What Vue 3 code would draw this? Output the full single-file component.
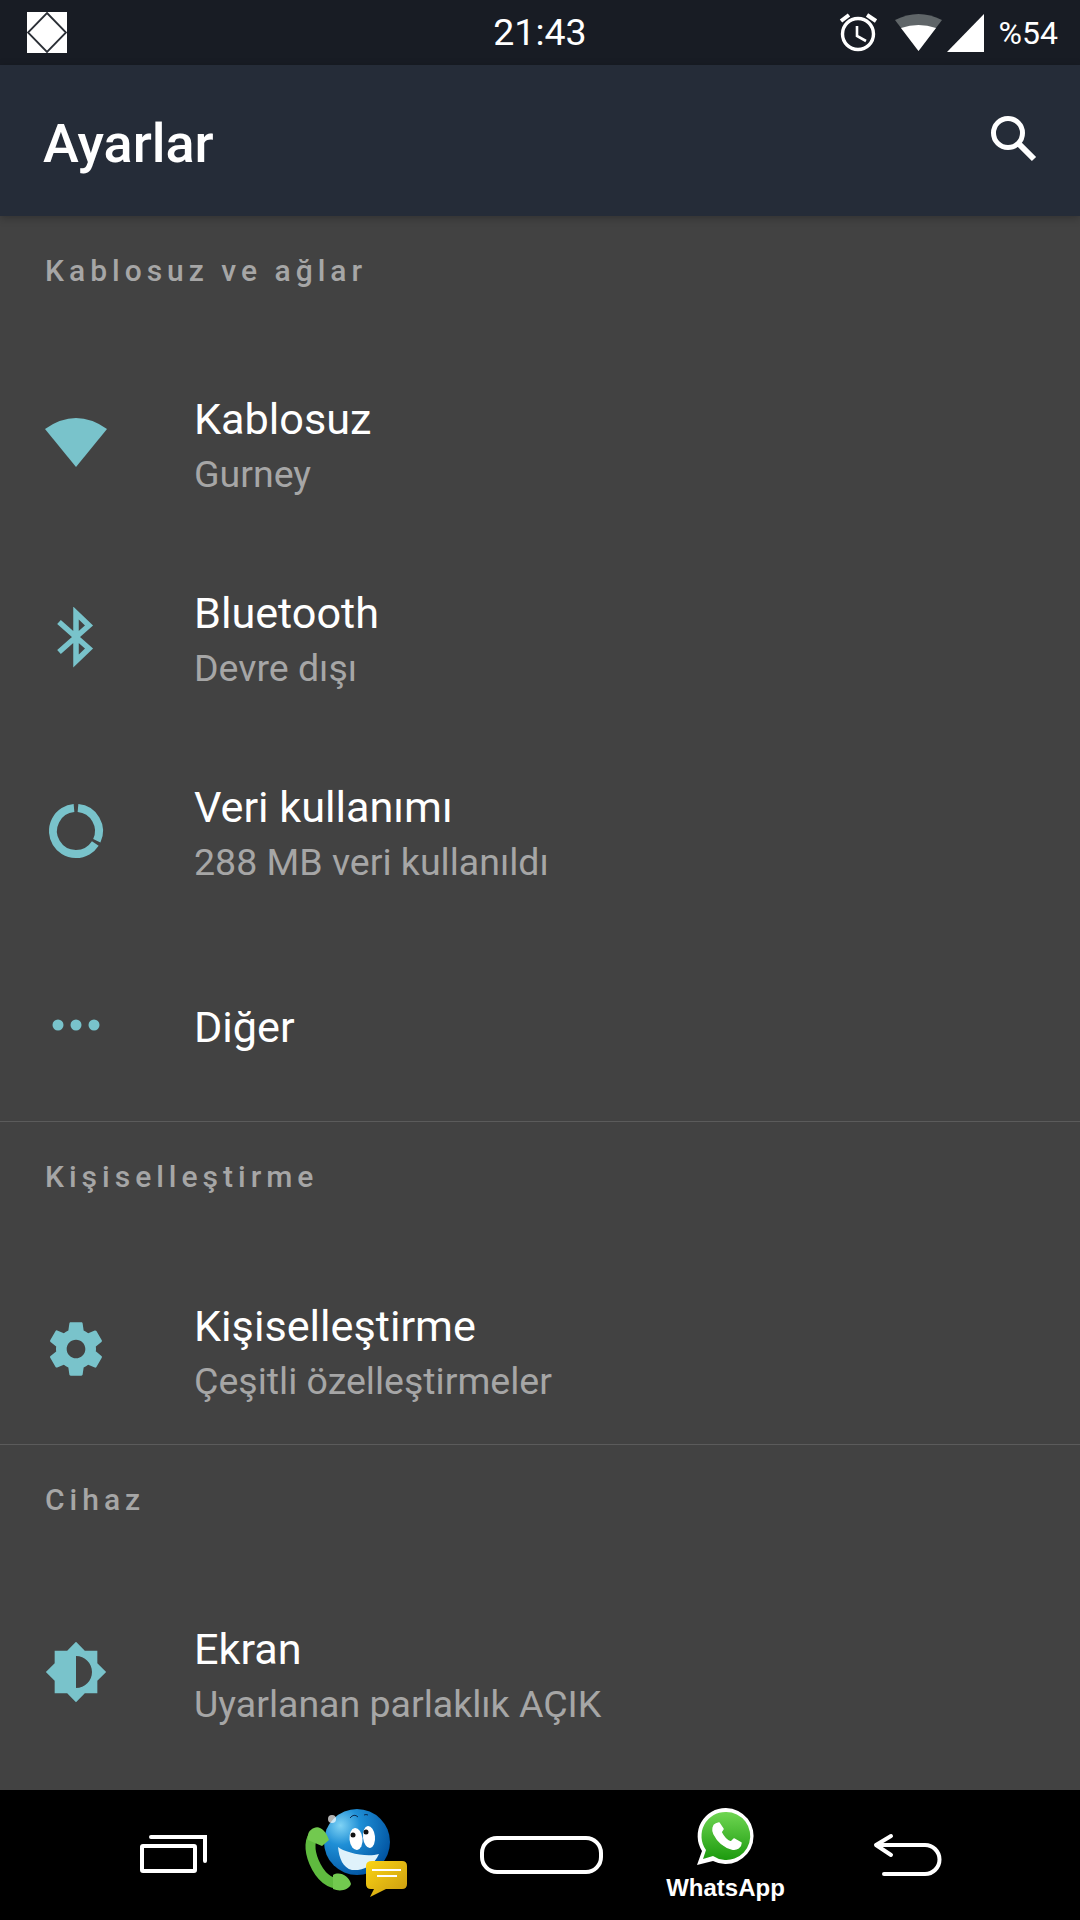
<script setup>
const sections = [
  {
    title: 'Kablosuz ve ağlar',
    rows: [
      { icon: 'wifi', name: 'Kablosuz', sub: 'Gurney' },
      { icon: 'bluetooth', name: 'Bluetooth', sub: 'Devre dışı' },
      { icon: 'data', name: 'Veri kullanımı', sub: '288 MB veri kullanıldı' },
      { icon: 'more', name: 'Diğer' }
    ]
  },
  {
    title: 'Kişiselleştirme',
    rows: [{ icon: 'gear', name: 'Kişiselleştirme', sub: 'Çeşitli özelleştirmeler' }]
  },
  {
    title: 'Cihaz',
    rows: [{ icon: 'display', name: 'Ekran', sub: 'Uyarlanan parlaklık AÇIK' }]
  }
]
</script>

<template>
  <div class="phone">
    <header class="status">
      <div class="status-left">
        <svg class="launcher" viewBox="0 0 40 41" width="40" height="41">
          <rect width="40" height="41" fill="#fff" />
          <path d="M20 1 L39 20.5 L20 40 L1 20.5 Z" fill="#fff" stroke="#2b2f36" stroke-width="1.8" />
        </svg>
      </div>
      <div class="clock">21:43</div>
      <div class="status-right">
        <svg class="status-icons" viewBox="838 0 150 65" width="150" height="65">
          <circle cx="858" cy="34" r="15.5" fill="none" stroke="#fff" stroke-width="3.4" />
          <path d="M857 26 V36 L866 41" fill="none" stroke="#fff" stroke-width="2.6" />
          <path d="M841 21 L849 15 M867 15 L876 21" fill="none" stroke="#fff" stroke-width="4" />
          <path d="M895 20 Q918.500 8 942 20 L918.500 51 Z" fill="#5f6568" />
          <path d="M901 28 Q918.500 22 936 28 L918.500 51 Z" fill="#fff" />
          <path d="M984 14 V52 H947 Z" fill="#fff" />
        </svg>
        <span class="battery">%54</span>
      </div>
    </header>

    <div class="toolbar">
      <h1 class="toolbar-title">Ayarlar</h1>
      <svg class="search" viewBox="0 0 50 50" width="50" height="50">
        <circle cx="20" cy="20" r="14.500" fill="none" stroke="#fff" stroke-width="5" />
        <path d="M30.500 30.500 L46 46" fill="none" stroke="#fff" stroke-width="6" />
      </svg>
    </div>

    <main class="content">
      <section v-for="(section, i) in sections" :key="section.title" class="section" :class="{ ruled: i > 0 }">
        <h2 class="section-title">{{ section.title }}</h2>
        <div v-for="row in section.rows" :key="row.name" class="row">
          <div class="row-icon">
            <svg v-if="row.icon === 'wifi'" viewBox="0 0 64 64" width="64" height="64">
              <path d="M1 16 Q32 -6 63 16 L32 54 Z" />
            </svg>
            <svg v-else-if="row.icon === 'bluetooth'" viewBox="0 0 64 64" width="64" height="64">
              <path d="M15 15 L45 41.500 L32 54 V6 L45 18.500 L15 45" class="line" stroke-width="5.500" />
            </svg>
            <svg v-else-if="row.icon === 'data'" viewBox="0 0 64 64" width="64" height="64">
              <path d="M34 7.100 A23 23 0 0 1 52.800 39.700 M51.300 42.500 A23 23 0 1 1 30 7.100" class="line" stroke-width="8" />
            </svg>
            <svg v-else-if="row.icon === 'more'" viewBox="0 0 64 64" width="64" height="64">
              <circle cx="14" cy="31" r="5.500" />
              <circle cx="32" cy="31" r="5.500" />
              <circle cx="50" cy="31" r="5.500" />
            </svg>
            <svg v-else-if="row.icon === 'gear'" viewBox="0 0 24 24" width="64" height="64">
              <path d="M19.430 12.980c.04-.32.07-.64.07-.98s-.03-.66-.07-.98l2.110-1.650c.19-.15.24-.42.12-.64l-2-3.460c-.12-.22-.39-.3-.61-.22l-2.490 1c-.52-.4-1.080-.73-1.690-.98l-.38-2.650C14.460 2.180 14.250 2 14 2h-4c-.25 0-.46.18-.49.42l-.38 2.650c-.61.25-1.170.59-1.690.98l-2.490-1c-.23-.09-.49 0-.61.22l-2 3.460c-.13.22-.07.49.12.64l2.110 1.650c-.04.32-.07.65-.07.98s.03.66.07.98l-2.110 1.650c-.19.15-.24.42-.12.64l2 3.460c.12.22.39.3.61.22l2.490-1c.52.4 1.080.73 1.690.98l.38 2.650c.03.24.24.42.49.42h4c.25 0 .46-.18.49-.42l.38-2.650c.61-.25 1.170-.59 1.690-.98l2.490 1c.23.09.49 0 .61-.22l2-3.460c.12-.22.07-.49-.12-.64l-2.010-1.650zM12 15.500c-1.930 0-3.500-1.570-3.500-3.500s1.570-3.500 3.500-3.500 3.500 1.570 3.500 3.500-1.570 3.500-3.500 3.500z" />
            </svg>
            <svg v-else viewBox="0 0 24 24" width="64" height="64">
              <path d="M20 15.310L23.310 12 20 8.690V4h-4.690L12 .69 8.690 4H4v4.690L.69 12 4 15.310V20h4.690L12 23.310 15.310 20H20v-4.690zM12 18V6c3.310 0 6 2.690 6 6s-2.690 6-6 6z" />
            </svg>
          </div>
          <div class="row-text">
            <div class="row-name">{{ row.name }}</div>
            <div v-if="row.sub" class="row-sub">{{ row.sub }}</div>
          </div>
        </div>
      </section>
    </main>

    <nav class="nav">
      <svg viewBox="81 1790 184 130" width="184" height="130">
        <rect x="142" y="1846" width="53" height="25" fill="none" stroke="#fff" stroke-width="4" rx="1" />
        <path d="M151 1837 H205 V1861" fill="none" stroke="#fff" stroke-width="4" stroke-linecap="round" />
      </svg>

      <svg viewBox="265 1790 184 130" width="184" height="130">
        <defs>
          <radialGradient id="ball" cx="0.25" cy="0.25" r="0.85">
            <stop offset="0" stop-color="#7fd3f5" />
            <stop offset="0.35" stop-color="#1f8fd6" />
            <stop offset="1" stop-color="#0052a0" />
          </radialGradient>
          <linearGradient id="note" x1="0" y1="0" x2="1" y2="1">
            <stop offset="0" stop-color="#fbd414" />
            <stop offset="1" stop-color="#c99a10" />
          </linearGradient>
        </defs>
        <circle cx="357" cy="1842" r="33" fill="url(#ball)" />
        <circle cx="332" cy="1819" r="4" fill="#fff" opacity="0.7" />
        <path d="M338 1847 C344 1852 366 1858 379 1854 C374 1866 362 1871 352 1870 C343 1868 339 1858 338 1847 Z" fill="#dff2fb" />
        <ellipse cx="356" cy="1839" rx="6.500" ry="11" fill="#fff" transform="rotate(-6 356 1839)" />
        <ellipse cx="369" cy="1837" rx="6" ry="11" fill="#fff" transform="rotate(-6 369 1837)" />
        <circle cx="353" cy="1835" r="2.500" fill="#111" />
        <circle cx="366" cy="1832" r="2.500" fill="#111" />
        <path d="M350 1818 Q354 1813 358 1817 M364 1815 Q366 1814 368 1815" fill="none" stroke="#0a2a50" stroke-width="1" />
        <path d="M316 1834 C309 1838 309 1850 314 1862 C320 1876 328 1884 341 1884" fill="none" stroke="#5fbb3f" stroke-width="10" />
        <path d="M314 1828 C319 1825 326 1830 329 1840 L322 1846 L308 1840 C307 1834 309 1830 314 1828 Z M333 1875 C340 1871 349 1876 351 1884 C349 1890 340 1892 333 1889 Z" fill="#72c94f" />
        <path d="M372 1861 H402 Q407 1861 407 1866 V1884 Q407 1889 402 1889 H386 L370 1897 L374 1889 H371 Q366 1889 366 1884 V1866 Q366 1861 372 1861 Z" fill="url(#note)" />
        <path d="M372 1870 H401 M377 1876 H397" stroke="#fff" stroke-width="2" />
      </svg>

      <svg viewBox="449 1790 184 130" width="184" height="130">
        <rect x="482" y="1838" width="119" height="34" rx="15" fill="none" stroke="#fff" stroke-width="4" />
      </svg>

      <svg viewBox="633 1790 184 130" width="184" height="130">
        <defs>
          <linearGradient id="wa" x1="0" y1="0" x2="0" y2="1">
            <stop offset="0" stop-color="#6fd652" />
            <stop offset="1" stop-color="#1c9a0e" />
          </linearGradient>
        </defs>
        <path d="M726 1808 A28 28 0 1 1 713 1861 L697 1865 L702 1851 A28 28 0 0 1 726 1808 Z" fill="#fff" />
        <path d="M726 1812 A24 24 0 1 1 713 1856 L703 1859 L706 1850 A24 24 0 0 1 726 1812 Z" fill="url(#wa)" />
        <path d="M716 1824 C713 1825 712 1830 714 1834 C718 1842 724 1847 732 1849 C737 1850 741 1847 741 1843 L734 1839 L731 1842 C727 1841 723 1836 721 1832 L723 1829 L719 1823 Z" fill="#fff" stroke="#fff" stroke-width="1.500" stroke-linejoin="round" />
        <text x="725.500" y="1896" class="wa-label">WhatsApp</text>
      </svg>

      <svg viewBox="817 1790 184 130" width="184" height="130">
        <path d="M891 1836 L876 1845 L891 1855 M876 1845 H925 A14.500 14.500 0 0 1 925 1874 H884" fill="none" stroke="#fff" stroke-width="4" stroke-linecap="round" stroke-linejoin="round" />
      </svg>
    </nav>
  </div>
</template>

<style scoped>
.phone {
  width: 1080px;
  height: 1920px;
  display: flex;
  flex-direction: column;
  overflow: hidden;
  background: #424242;
  font-family: Roboto, "Noto Sans", sans-serif;
  color: #fff;
}

.status {
  height: 65px;
  flex: none;
  display: grid;
  grid-template-columns: 1fr auto 1fr;
  align-items: center;
  background: #181c24;
}
.status-left {
  padding-left: 27px;
  display: flex;
  align-items: center;
}
.clock {
  font-size: 37.5px;
  line-height: 65px;
}
.status-right {
  display: flex;
  align-items: center;
  justify-content: flex-end;
  padding-right: 22px;
}
.status-icons { display: block; }
.battery {
  font-size: 32px;
  margin-left: 11px;
}

.toolbar {
  height: 151px;
  flex: none;
  box-sizing: border-box;
  display: flex;
  align-items: center;
  justify-content: space-between;
  padding: 5px 42px 0 43px;
  background: #252c38;
  position: relative;
  z-index: 1;
  box-shadow: 0 2px 8px rgba(0, 0, 0, 0.25);
}
.toolbar-title {
  margin: 0;
  font-size: 54px;
  font-weight: 500;
}
.search {
  display: block;
  margin-bottom: 10px;
}

.content {
  flex: 1;
  min-height: 0;
  overflow: hidden;
}
.section.ruled { border-top: 1px solid #5b5b5b; }
.section-title {
  margin: 0;
  height: 132px;
  padding: 37px 0 0 45px;
  box-sizing: border-box;
  font-size: 30px;
  line-height: 36px;
  font-weight: 500;
  letter-spacing: 5px;
  color: #a6a6a6;
}

.row {
  display: flex;
  align-items: center;
  height: 194px;
}
.section:not(:first-child) .row { height: 190px; }
.row:nth-child(5) { height: 191px; }
.row-icon {
  width: 194px;
  flex: none;
  padding-left: 44px;
  box-sizing: border-box;
}
.row-icon svg {
  display: block;
  fill: #79c3cb;
}
.row-icon .line {
  fill: none;
  stroke: #79c3cb;
}
.row-text { margin-top: 4px; }
.section:not(:first-child) .row-text { margin-top: 9px; }
.row-name {
  font-size: 43.2px;
  line-height: 55px;
}
.row-sub {
  font-size: 37.5px;
  line-height: 55px;
  color: #a6a6a6;
}

.nav {
  height: 130px;
  flex: none;
  display: flex;
  padding-left: 81px;
  background: #000;
}
.nav svg {
  display: block;
  flex: none;
}
.wa-label {
  font-family: "Liberation Sans", Arial, sans-serif;
  font-size: 24px;
  font-weight: 700;
  fill: #fff;
  text-anchor: middle;
}
</style>
